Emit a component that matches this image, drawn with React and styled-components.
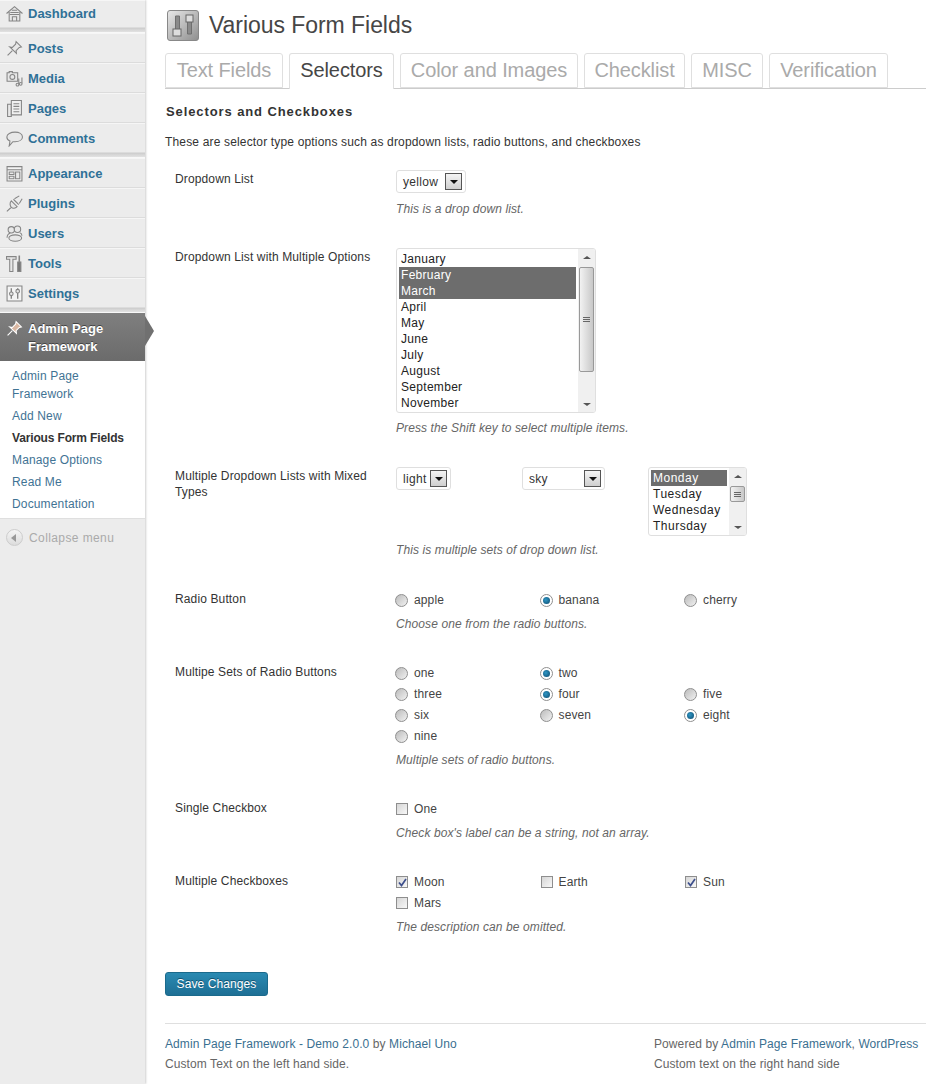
import React from 'react';
import styled, {createGlobalStyle} from 'styled-components';

const GlobalStyle = createGlobalStyle`
  html, body {
    margin: 0;
    padding: 0;
    background: #fff;
  }
  body {
    color: #333;
    font-family: "Liberation Sans", Arial, sans-serif;
    font-size: 12px;
  }
`;

const Page = styled.div`
  display: flex;
  width: 941px;
  height: 1084px;
  overflow: hidden;
`;

const Sidebar = styled.nav`
  flex: 0 0 145px;
  background: #ececec;
  box-shadow: 1px 0 2px #cfcfcf;
  position: relative;
`;

const MenuItem = styled.div`
  display: flex;
  align-items: center;
  height: ${p => p.$height || 30}px;
  padding: 0 0 ${p => p.$bottom || 0}px 6px;
  gap: 5px;
  box-sizing: border-box;
  border-top: 1px solid #f6f6f6;
  border-bottom: 1px solid #dcdcdc;
  color: #2f7197;
  font-size: 13px;
  font-weight: 700;
`;

const Separator = styled.div`
  height: 5px;
  box-sizing: border-box;
  background: linear-gradient(#d3d3d3, #e2e2e2);
  border-top: 1px solid #cfcfcf;
  border-bottom: 1px solid #f8f8f8;
`;

const ActiveItem = styled.div`
  position: relative;
  display: flex;
  height: 48px;
  box-sizing: border-box;
  padding: 7px 0 0 6px;
  gap: 5px;
  background: linear-gradient(#7f7f7f, #6b6b6b);
  color: #fff;
  font-size: 13px;
  font-weight: 700;
  line-height: 18px;
  text-shadow: 0 -1px 0 #444;

  &::after {
    content: '';
    position: absolute;
    top: 3px;
    left: 145px;
    border-style: solid;
    border-width: 15px 0 15px 9px;
    border-color: transparent transparent transparent #707070;
  }
`;

const Submenu = styled.div`
  padding: 4px 0;
  background: #fff;
  border-bottom: 1px solid #dfdfdf;
  box-sizing: border-box;
  height: 158px;
`;

const SubItem = styled.div`
  padding: 2px 12px;
  color: ${p => (p.$current ? '#333' : '#3f7394')};
  font-weight: ${p => (p.$current ? 700 : 400)};
  line-height: 18px;
  letter-spacing: ${p => (p.$current ? '-.15px' : '.15px')};
`;

const Collapse = styled.div`
  display: flex;
  align-items: center;
  gap: 6px;
  margin-top: 10px;
  padding-left: 6px;
  color: #aaa;
  letter-spacing: .4px;
`;

const CollapseCircle = styled.span`
  display: flex;
  align-items: center;
  justify-content: center;
  width: 15px;
  height: 15px;
  border: 1px solid #ccc;
  border-radius: 50%;
  background: linear-gradient(#f5f5f5, #dcdcdc);

  &::before {
    content: '';
    margin-left: -2px;
    border-style: solid;
    border-width: 4px 5px 4px 0;
    border-color: transparent #999 transparent transparent;
  }
`;

const Main = styled.main`
  flex: 0 0 761px;
  margin-left: 20px;
`;

const TitleRow = styled.div`
  display: flex;
  align-items: center;
  gap: 10px;
  height: 53px;
  padding: 0 0 3px 2px;
  box-sizing: border-box;
`;

const Title = styled.h2`
  margin: 0;
  color: #464646;
  font-size: 23px;
  font-weight: 400;
  letter-spacing: -.05px;
`;

const Tabs = styled.div`
  display: flex;
  gap: 6px;
  height: 36px;
  box-sizing: border-box;
  border-bottom: 1px solid #ccc;
`;

const Tab = styled.div`
  height: ${p => (p.$active ? 36 : 35)}px;
  width: ${p => p.$width}px;
  box-sizing: border-box;
  border: 1px solid #dfdfdf;
  border-bottom: ${p => (p.$active ? '0' : '1px solid #dfdfdf')};
  border-radius: 3px 3px 0 0;
  background: #fff;
  color: ${p => (p.$active ? '#464646' : '#aaa')};
  font-size: 20px;
  line-height: 32px;
  text-align: center;
  letter-spacing: -.1px;
`;

const SectionTitle = styled.h3`
  margin: 14px 0 0 1px;
  color: #333;
  font-size: 13px;
  font-weight: 700;
  line-height: 18px;
  letter-spacing: .9px;
`;

const Intro = styled.p`
  margin: 13px 0 0;
  line-height: 16px;
  letter-spacing: .165px;
`;

const Form = styled.div`
  display: flex;
  flex-direction: column;
  gap: 31px;
  margin-top: 20px;
`;

const Row = styled.div`
  display: flex;
`;

const RowLabel = styled.div`
  flex: 0 0 231px;
  box-sizing: border-box;
  padding: 1px 20px 0 10px;
  line-height: 16px;
  letter-spacing: .13px;
`;

const Field = styled.div`
  flex: 1;
`;

const Description = styled.div`
  margin-top: ${p => p.$gap || 5}px;
  margin-bottom: ${p => p.$after || 0}px;
  color: #666;
  font-style: italic;
  line-height: 16px;
  letter-spacing: .1px;
`;

const Dropdown = styled.div`
  display: flex;
  align-items: center;
  justify-content: space-between;
  width: ${p => p.$width}px;
  height: 23px;
  box-sizing: border-box;
  padding: 0 3px 0 6px;
  border: 1px solid #dfdfdf;
  border-radius: 3px;
  color: #333;
  line-height: 19px;
  letter-spacing: .3px;
`;

const DropText = styled.span`
  padding-top: 1px;
`;

const DropArrow = styled.span`
  display: flex;
  align-items: center;
  justify-content: center;
  width: 17px;
  height: 17px;
  box-sizing: border-box;
  border: 1px solid #555;
  background: linear-gradient(#f4f4f4, #cfcfcf);

  &::before {
    content: '';
    border-style: solid;
    border-width: 4px 4px 0;
    border-color: #111 transparent transparent;
  }
`;

const ListBox = styled.div`
  display: flex;
  width: ${p => p.$width}px;
  height: ${p => p.$height}px;
  box-sizing: border-box;
  border: 1px solid #dfdfdf;
  border-radius: 3px;
  overflow: hidden;
`;

const Options = styled.div`
  flex: 1;
  padding: 2px 2px 0;
  overflow: hidden;
  letter-spacing: ${p => p.$spacing}px;
`;

const Option = styled.div`
  height: 16px;
  padding-left: 2px;
  background: ${p => (p.$selected ? '#6d6d6d' : 'transparent')};
  color: ${p => (p.$selected ? '#fff' : '#222')};
  line-height: 16px;
`;

const Scrollbar = styled.div`
  display: flex;
  flex-direction: column;
  align-items: center;
  flex: 0 0 17px;
  background: #f0f0f0;
`;

const ScrollUp = styled.span`
  flex: 0 0 auto;
  margin-top: ${p => (p.$down ? 'auto' : '7px')};
  margin-bottom: ${p => (p.$down ? '6px' : '0')};
  border-style: solid;
  border-width: ${p => (p.$down ? '3px 4px 0' : '0 4px 3px')};
  border-color: ${p => (p.$down ? '#555 transparent transparent' : 'transparent transparent #555')};
`;

const Thumb = styled.div`
  display: flex;
  flex-direction: column;
  align-items: center;
  justify-content: center;
  gap: 1px;
  width: 15px;
  height: ${p => p.$height}px;
  margin-top: ${p => p.$top}px;
  box-sizing: border-box;
  border: 1px solid #999;
  border-radius: 2px;
  background: linear-gradient(90deg, #f2f2f2, #c8c8c8);

  i {
    display: block;
    width: 7px;
    height: 1px;
    background: #666;
  }
`;

const MixedGrid = styled.div`
  display: grid;
  grid-template-columns: 126px 126px auto;
  align-items: start;
`;

const ChoiceGrid = styled.div`
  display: grid;
  grid-template-columns: 144.5px 144.5px 144.5px;
  grid-auto-rows: 21px;
`;

const Choice = styled.label`
  display: flex;
  align-items: center;
  gap: 6px;
  padding-bottom: 1px;
  box-sizing: border-box;
  color: #444;
  letter-spacing: .13px;
`;

const Radio = styled.span`
  display: flex;
  align-items: center;
  justify-content: center;
  width: 11px;
  height: 11px;
  margin-left: -1px;
  border: 1px solid #8f8f8f;
  border-radius: 50%;
  background: ${p => (p.$checked ? '#fff' : 'linear-gradient(135deg, #bbb, #f2f2f2)')};

  &::before {
    content: '';
    display: ${p => (p.$checked ? 'block' : 'none')};
    width: 7px;
    height: 7px;
    border-radius: 50%;
    background: radial-gradient(circle at 40% 40%, #2f96c4, #0c4a6e);
  }
`;

const Checkbox = styled.span`
  display: flex;
  align-items: center;
  justify-content: center;
  flex: 0 0 auto;
  width: 12px;
  height: 12px;
  box-sizing: border-box;
  border: 1px solid #8e8e8e;
  background: linear-gradient(135deg, #d6d6d6, #f8f8f8);
`;

const SaveButton = styled.div`
  display: flex;
  align-items: center;
  justify-content: center;
  width: 103px;
  height: 24px;
  margin-top: 37px;
  box-sizing: border-box;
  border: 1px solid #1b6a8c;
  border-radius: 3px;
  background: linear-gradient(#2a8ab2, #1e6f95);
  color: #fff;
  text-shadow: 0 -1px 0 #14506c;
  letter-spacing: .1px;
`;

const Footer = styled.footer`
  display: flex;
  justify-content: space-between;
  margin-top: 27px;
  padding-top: 10px;
  border-top: 1px solid #dfdfdf;
  color: #666;
  line-height: 20px;
  letter-spacing: .09px;
  white-space: nowrap;
`;

const FooterLink = styled.span`
  color: #3a6f90;
`;

const FooterRight = styled.div`
  width: 272px;
`;

const Svg = ({children}) => (
  <svg width="17" height="17" viewBox="0 0 16 16" fill="#e8e8e8" stroke="#858585" strokeWidth="1" style={{flex: '0 0 auto'}}>
    {children}
  </svg>
);

function PinIcon({light}) {
  const line = light ? '#fff' : '#858585';
  return (
    <Svg>
      <path d="M9.500 1.500 14.500 6.500l-2 .5-3 3 .3 2.500L3.500 6.500 6 7l3-3z" fill={light ? '#d9b7a2' : '#e8e8e8'} stroke={line} />
      <path d="M6 10 1.500 14.500" fill="none" stroke={line} />
    </Svg>
  );
}

const menuIcons = {
  Dashboard: (
    <Svg>
      <path d="M.5 8 8 1.500 15.500 8M3 6.500V15h10V6.500" />
      <path d="M6 15v-4h4v4M5.500 5h5M4 7h8M3.500 9h9" fill="none" />
    </Svg>
  ),
  Posts: <PinIcon />,
  Media: (
    <Svg>
      <path d="M1 2.500h2v-1h3v1h5v8H1z" />
      <circle cx="6" cy="6.500" r="2.300" />
      <path d="M12 8v5.500M15 7v5.500" fill="none" />
      <circle cx="10.800" cy="13.800" r="1.300" />
      <circle cx="13.800" cy="13" r="1.300" />
    </Svg>
  ),
  Pages: (
    <Svg>
      <path d="M1.500 4h3.500v11.500H1.500z" />
      <path d="M5 .5h9.500v13.500H5z" fill="#f0f0f0" />
      <path d="M7 3.500h5.500M7 6h5.500M7 8.500h5.500M7 11h5.500" fill="none" />
    </Svg>
  ),
  Comments: (
    <Svg>
      <path d="M8.500 2c3.900 0 7 1.800 7 4.500s-3.100 4.500-7 4.500H6.500L3 15l.7-4.600C2 9.600.8 8.300.8 6.500.8 3.800 4.300 2 8.500 2z" />
    </Svg>
  ),
  Appearance: (
    <Svg>
      <path d="M1 1.500h14v13.500H1z" fill="#f4f4f4" />
      <path d="M1 4.500h14" fill="none" />
      <path d="M3 6.500h4.500V9H3zM3 10.500h4.500V13H3zM9 6.500h4V13H9z" />
    </Svg>
  ),
  Plugins: (
    <Svg>
      <path d="M5 5.500 10.500 11c-1.800 1.800-4.200 2-5.500.7S3.200 7.300 5 5.500z" />
      <path d="M8 3.500 12.500.8M12.500 8 15.200 3.500M4.500 12 .8 15.500" fill="none" />
      <path d="M7 4l5 5" fill="none" />
    </Svg>
  ),
  Users: (
    <Svg>
      <circle cx="5" cy="4.500" r="3" />
      <circle cx="10.800" cy="4" r="3" />
      <path d="M1 12c0-2.500 1.500-4 3-4.300M15 10c0-1.500-.8-2.500-2-2.800" fill="none" />
      <ellipse cx="8.700" cy="12.300" rx="6" ry="3" />
    </Svg>
  ),
  Tools: (
    <Svg>
      <path d="M.5 1.500h9v2.500H6.500v11.500h-3V4H.5z" />
      <path d="M12.500 .5v6" fill="none" strokeWidth="1.500" />
      <path d="M11 6.500h3v9h-3z" fill="#777" />
    </Svg>
  ),
  Settings: (
    <Svg>
      <path d="M1 1h14v14H1z" fill="#f4f4f4" />
      <path d="M5 3v3.500M5 10v3M11 3v1M11 7.500V13" fill="none" strokeWidth="1.300" />
      <circle cx="5" cy="8.300" r="1.700" />
      <circle cx="11" cy="5.800" r="1.700" />
    </Svg>
  )
};

const TitleIcon = () => (
  <svg width="32" height="31" viewBox="0 0 32 31" style={{flex: '0 0 auto'}}>
    <defs>
      <linearGradient id="titleBg" x1="0" y1="0" x2="1" y2="1">
        <stop offset="0" stopColor="#e8e8e8" />
        <stop offset="1" stopColor="#8e8e8e" />
      </linearGradient>
    </defs>
    <rect x=".5" y=".5" width="31" height="30" rx="2.500" fill="url(#titleBg)" stroke="#888" />
    <path d="M8.500 6h4v14h-4zM20.500 6h4v18h-4z" fill="#8a8a8a" stroke="#6f6f6f" />
    <rect x="6" y="19" width="8" height="7" fill="#ddd" stroke="#666" />
    <rect x="19" y="5" width="7" height="7" fill="#ddd" stroke="#666" />
  </svg>
);

const Check = () => (
  <svg width="9" height="9" viewBox="0 0 9 9">
    <path d="M1 4.500 3.500 7.500 8 1" fill="none" stroke="#3d4f8c" strokeWidth="1.700" />
  </svg>
);

const tabs = [
  ['Text Fields', 118],
  ['Selectors', 105, true],
  ['Color and Images', 178],
  ['Checklist', 101],
  ['MISC', 72],
  ['Verification', 119]
];

const months = ['January', 'February', 'March', 'April', 'May', 'June', 'July', 'August', 'September', 'November'];
const days = ['Monday', 'Tuesday', 'Wednesday', 'Thursday'];

const ScrollTrack = ({top, height, lines}) => (
  <Scrollbar>
    <ScrollUp />
    <Thumb $top={top} $height={height}>
      {Array.from({length: lines}, (_, i) => <i key={i} />)}
    </Thumb>
    <ScrollUp $down />
  </Scrollbar>
);

const RadioChoice = ({label, checked}) => (
  <Choice>
    <Radio $checked={checked} />
    {label}
  </Choice>
);

const CheckChoice = ({label, checked}) => (
  <Choice>
    <Checkbox>{checked && <Check />}</Checkbox>
    {label}
  </Choice>
);

const App = () => (
  <Page>
    <GlobalStyle />
    <Sidebar>
      <MenuItem $height={28} $bottom={2}>{menuIcons.Dashboard}Dashboard</MenuItem>
      <Separator />
      {['Posts', 'Media', 'Pages', 'Comments'].map(name => (
        <MenuItem key={name}>{menuIcons[name]}{name}</MenuItem>
      ))}
      <Separator />
      {['Appearance', 'Plugins', 'Users', 'Tools', 'Settings'].map(name => (
        <MenuItem key={name}>{menuIcons[name]}{name}</MenuItem>
      ))}
      <Separator />
      <ActiveItem>
        <PinIcon light />
        <span>Admin Page<br />Framework</span>
      </ActiveItem>
      <Submenu>
        <SubItem>Admin Page<br />Framework</SubItem>
        <SubItem>Add New</SubItem>
        <SubItem $current>Various Form Fields</SubItem>
        <SubItem>Manage Options</SubItem>
        <SubItem>Read Me</SubItem>
        <SubItem>Documentation</SubItem>
      </Submenu>
      <Collapse><CollapseCircle />Collapse menu</Collapse>
    </Sidebar>
    <Main>
      <TitleRow>
        <TitleIcon />
        <Title>Various Form Fields</Title>
      </TitleRow>
      <Tabs>
        {tabs.map(([name, width, active]) => (
          <Tab key={name} $width={width} $active={active}>{name}</Tab>
        ))}
      </Tabs>
      <SectionTitle>Selectors and Checkboxes</SectionTitle>
      <Intro>These are selector type options such as dropdown lists, radio buttons, and checkboxes</Intro>
      <Form>
        <Row>
          <RowLabel>Dropdown List</RowLabel>
          <Field>
            <Dropdown $width={70}><DropText>yellow</DropText><DropArrow /></Dropdown>
            <Description $gap={8}>This is a drop down list.</Description>
          </Field>
        </Row>
        <Row>
          <RowLabel>Dropdown List with Multiple Options</RowLabel>
          <Field>
            <ListBox $width={200} $height={165}>
              <Options $spacing={0.3}>
                {months.map(m => (
                  <Option key={m} $selected={m === 'February' || m === 'March'}>{m}</Option>
                ))}
              </Options>
              <ScrollTrack top={8} height={105} lines={3} />
            </ListBox>
            <Description $gap={7}>Press the Shift key to select multiple items.</Description>
          </Field>
        </Row>
        <Row>
          <RowLabel>Multiple Dropdown Lists with Mixed Types</RowLabel>
          <Field>
            <MixedGrid>
              <Dropdown $width={55}><DropText>light</DropText><DropArrow /></Dropdown>
              <Dropdown $width={83}><DropText>sky</DropText><DropArrow /></Dropdown>
              <ListBox $width={99} $height={69}>
                <Options $spacing={0.5}>
                  {days.map(d => (
                    <Option key={d} $selected={d === 'Monday'}>{d}</Option>
                  ))}
                </Options>
                <ScrollTrack top={8} height={16} lines={3} />
              </ListBox>
            </MixedGrid>
            <Description $gap={6} $after={1}>This is multiple sets of drop down list.</Description>
          </Field>
        </Row>
        <Row>
          <RowLabel>Radio Button</RowLabel>
          <Field>
            <ChoiceGrid>
              <RadioChoice label="apple" />
              <RadioChoice label="banana" checked />
              <RadioChoice label="cherry" />
            </ChoiceGrid>
            <Description>Choose one from the radio buttons.</Description>
          </Field>
        </Row>
        <Row>
          <RowLabel>Multipe Sets of Radio Buttons</RowLabel>
          <Field>
            <ChoiceGrid>
              <RadioChoice label="one" />
              <RadioChoice label="two" checked />
              <span />
              <RadioChoice label="three" />
              <RadioChoice label="four" checked />
              <RadioChoice label="five" />
              <RadioChoice label="six" />
              <RadioChoice label="seven" />
              <RadioChoice label="eight" checked />
              <RadioChoice label="nine" />
            </ChoiceGrid>
            <Description>Multiple sets of radio buttons.</Description>
          </Field>
        </Row>
        <Row>
          <RowLabel>Single Checkbox</RowLabel>
          <Field>
            <ChoiceGrid>
              <CheckChoice label="One" />
            </ChoiceGrid>
            <Description>Check box's label can be a string, not an array.</Description>
          </Field>
        </Row>
        <Row>
          <RowLabel>Multiple Checkboxes</RowLabel>
          <Field>
            <ChoiceGrid>
              <CheckChoice label="Moon" checked />
              <CheckChoice label="Earth" />
              <CheckChoice label="Sun" checked />
              <CheckChoice label="Mars" />
            </ChoiceGrid>
            <Description>The description can be omitted.</Description>
          </Field>
        </Row>
      </Form>
      <SaveButton>Save Changes</SaveButton>
      <Footer>
        <div>
          <FooterLink>Admin Page Framework - Demo 2.0.0</FooterLink> by <FooterLink>Michael Uno</FooterLink>
          <br />Custom Text on the left hand side.
        </div>
        <FooterRight>
          Powered by <FooterLink>Admin Page Framework</FooterLink>, <FooterLink>WordPress</FooterLink>
          <br />Custom text on the right hand side
        </FooterRight>
      </Footer>
    </Main>
  </Page>
);

export default App;
